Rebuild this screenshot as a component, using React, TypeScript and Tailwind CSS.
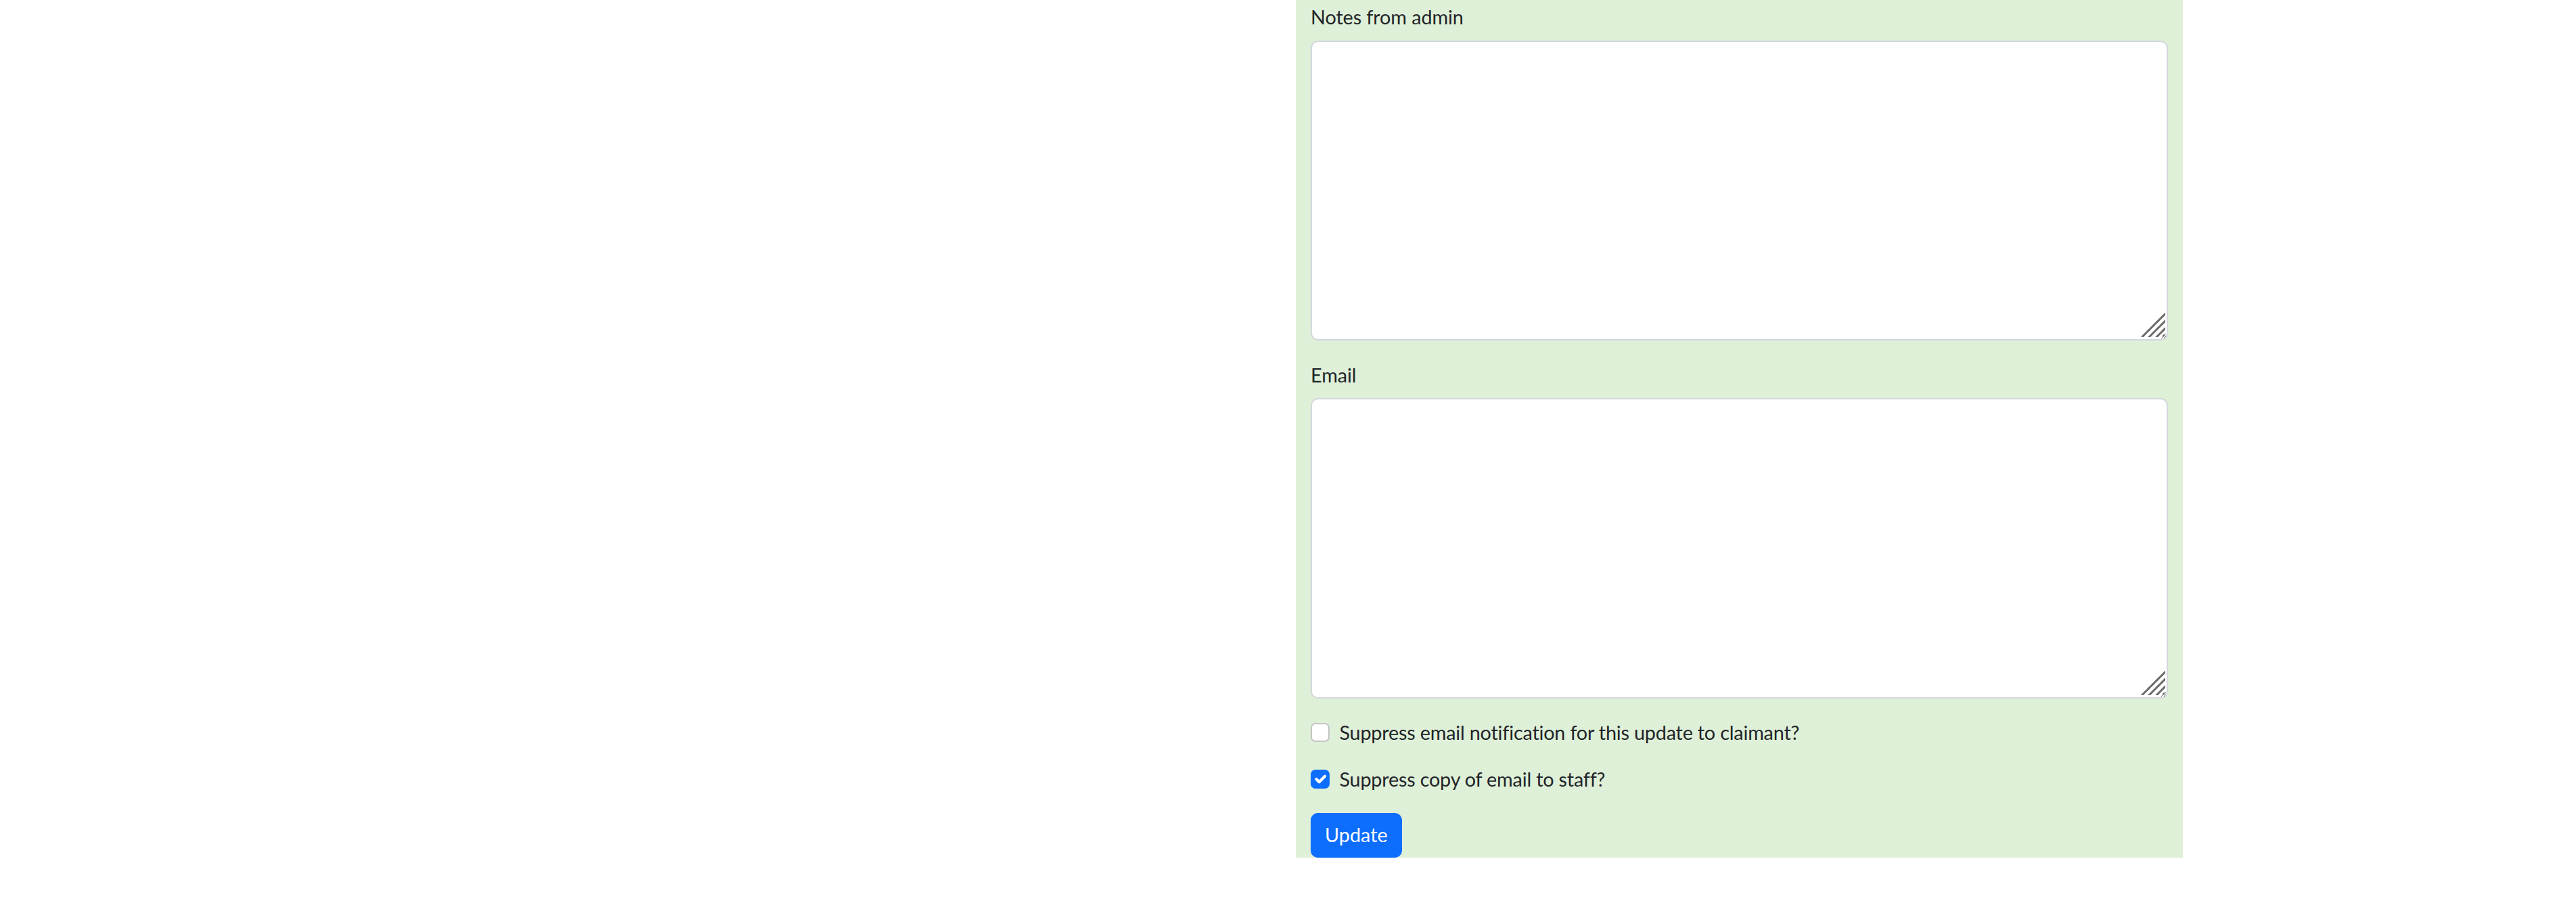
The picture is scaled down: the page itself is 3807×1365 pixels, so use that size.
import React, { useState } from 'react';

// --- Admin update form (scaled bootstrap look) ---
function Check({ label, checked, onChange }: { label: string; checked: boolean; onChange: () => void }) {
  return (
    <label className="flex items-start h-[43.2px] leading-[43.2px] text-[28.8px] tracking-[-0.2px] cursor-pointer">
      <span className="relative mt-[7.2px] mr-[14.4px] w-[28px] h-[28px] shrink-0">
        <input
          type="checkbox"
          checked={checked}
          onChange={onChange}
          className={`appearance-none block w-[28px] h-[28px] rounded-[7px] border-2 m-0 ${
            checked ? 'bg-[#0d6efd] border-[#0d6efd]' : 'bg-white border-[#c4c4c4]'
          }`}
        />
        {checked && (
          <svg viewBox="0 0 20 20" className="absolute inset-0 w-[28px] h-[28px] pointer-events-none">
            <path d="m6 10 3 3 6-6" fill="none" stroke="#fff" strokeLinecap="round" strokeLinejoin="round" strokeWidth="3" />
          </svg>
        )}
      </span>
      <span>{label}</span>
    </label>
  );
}

// textarea with the big hatched grip drawn over the native one
function Area({ height }: { height: string }) {
  return (
    <div className="relative">
      <textarea
        className={`block w-full ${height} rounded-[10.8px] border-2 border-[#d3d7dc] bg-white outline-none p-[11px] text-[28.8px] resize-y`}
      />
      <svg viewBox="0 0 36 36" className="absolute right-[4px] bottom-[5px] w-[36px] h-[36px] pointer-events-none">
        <g stroke="#6b6b6b" strokeWidth="3" strokeLinecap="round" strokeDasharray="4 1.5">
          <line x1="36" y1="1.5" x2="1.5" y2="36" />
          <line x1="36" y1="12" x2="12" y2="36" />
          <line x1="36" y1="23" x2="23" y2="36" />
          <line x1="33.5" y1="34" x2="34" y2="33.5" />
        </g>
      </svg>
    </div>
  );
}

export default function App() {
  const [suppressClaimant, setSuppressClaimant] = useState(false);
  const [suppressStaff, setSuppressStaff] = useState(true);

  return (
    <div className="min-h-screen bg-white text-[#212529] font-['Lato','Open_Sans',sans-serif]">
      <div className="pl-[1915px]">
        <form className="w-[1311px] bg-[#dff0d8] px-[22px] pt-[2px] flex flex-col" onSubmit={(e) => e.preventDefault()}>
          {/* Notes */}
          <label className="block text-[28.8px] leading-[43.2px] pt-[2px] mb-[13px] tracking-[-0.1px]">Notes from admin</label>
          <Area height="h-[443px]" />

          {/* Email */}
          <label className="block text-[28.8px] leading-[43.2px] mt-[27px] pt-[3px] mb-[12px] tracking-[-0.1px]">Email</label>
          <Area height="h-[444px]" />

          <div className="mt-[28.5px] flex flex-col gap-[25.8px]">
            <Check
              label="Suppress email notification for this update to claimant?"
              checked={suppressClaimant}
              onChange={() => setSuppressClaimant((v) => !v)}
            />
            <Check
              label="Suppress copy of email to staff?"
              checked={suppressStaff}
              onChange={() => setSuppressStaff((v) => !v)}
            />
          </div>

          <div className="mt-[28px]">
            <button
              type="submit"
              className="h-[66px] px-[21px] rounded-[10.8px] bg-[#0d6efd] text-white text-[28.8px] leading-[43.2px]"
            >
              Update
            </button>
          </div>
        </form>
      </div>
    </div>
  );
}
